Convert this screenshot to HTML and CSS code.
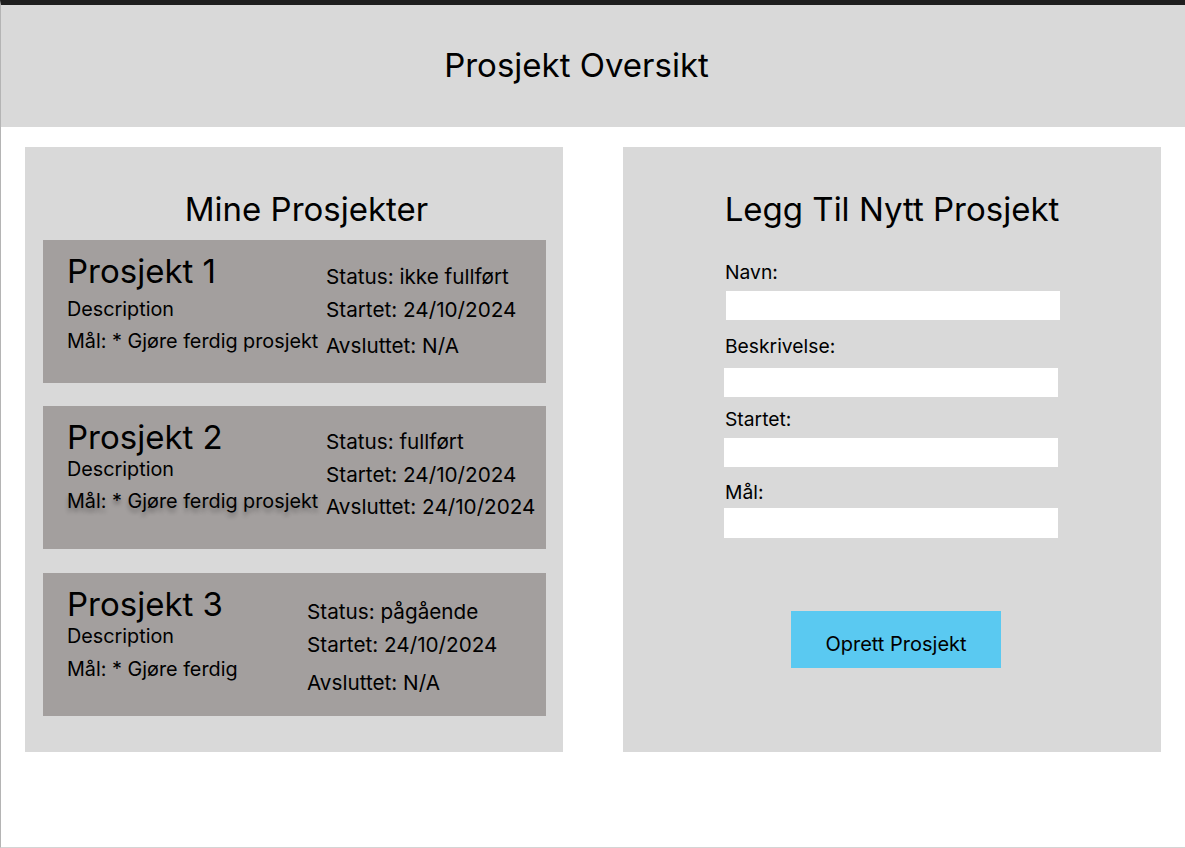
FILE: index.html
```html
<!DOCTYPE html>
<html lang="no">
<head>
<meta charset="utf-8">
<title>Prosjekt Oversikt</title>
<link rel="stylesheet" href="styles.css">
</head>
<body>
<div class="frame">
  <header class="topbar">
    <h1 class="page-title">Prosjekt Oversikt</h1>
  </header>
  <main class="content">
    <section class="panel">
      <h2 class="panel-title panel-title--left">Mine Prosjekter</h2>
      <div class="card-list">
        <article class="card card-1">
          <div class="card-main">
            <h3 class="card-title">Prosjekt 1</h3>
            <p class="card-desc">Description</p>
            <p class="card-goal">Mål: * Gjøre ferdig prosjekt</p>
          </div>
          <div class="card-meta">
            <p class="meta-status">Status: ikke fullført</p>
            <p class="meta-start">Startet: 24/10/2024</p>
            <p class="meta-end">Avsluttet: N/A</p>
          </div>
        </article>
        <article class="card card-2">
          <div class="card-main">
            <h3 class="card-title">Prosjekt 2</h3>
            <p class="card-desc">Description</p>
            <p class="card-goal card-goal--shadow">Mål: * Gjøre ferdig prosjekt</p>
          </div>
          <div class="card-meta">
            <p class="meta-status">Status: fullført</p>
            <p class="meta-start">Startet: 24/10/2024</p>
            <p class="meta-end">Avsluttet: 24/10/2024</p>
          </div>
        </article>
        <article class="card card-3">
          <div class="card-main">
            <h3 class="card-title">Prosjekt 3</h3>
            <p class="card-desc">Description</p>
            <p class="card-goal">Mål: * Gjøre ferdig</p>
          </div>
          <div class="card-meta">
            <p class="meta-status">Status: pågående</p>
            <p class="meta-start">Startet: 24/10/2024</p>
            <p class="meta-end">Avsluttet: N/A</p>
          </div>
        </article>
      </div>
    </section>
    <section class="panel panel--form">
      <h2 class="panel-title">Legg Til Nytt Prosjekt</h2>
      <form class="form">
        <label class="field-label field-label--navn" for="navn">Navn:</label>
        <input class="field-input field-input--navn" id="navn" type="text">
        <label class="field-label field-label--beskrivelse" for="beskrivelse">Beskrivelse:</label>
        <input class="field-input field-input--beskrivelse" id="beskrivelse" type="text">
        <label class="field-label field-label--startet" for="startet">Startet:</label>
        <input class="field-input field-input--startet" id="startet" type="text">
        <label class="field-label field-label--maal" for="maal">Mål:</label>
        <input class="field-input field-input--maal" id="maal" type="text">
        <button class="submit" type="button">Oprett Prosjekt</button>
      </form>
    </section>
  </main>
</div>
</body>
</html>
```

FILE: styles.css
```css
* {
  box-sizing: border-box;
}

html, body {
  margin: 0;
  padding: 0;
  background: #ffffff;
}

body {
  font-family: "Inter", "Noto Sans", "Liberation Sans", sans-serif;
  color: #000000;
  width: 1185px;
  height: 848px;
  overflow: hidden;
}

.frame {
  height: 848px;
  border-top: 5px solid #1e1e1e;
  border-left: 1px solid #b4b4b4;
  border-bottom: 1px solid #d4d4d4;
  display: flex;
  flex-direction: column;
}

.topbar {
  height: 122px;
  background: #d9d9d9;
  display: flex;
  align-items: center;
  justify-content: center;
  padding-right: 33px;
  padding-bottom: 2px;
}

.page-title {
  margin: 0;
  font-size: 33px;
  font-weight: 400;
  line-height: 38px;
}

.content {
  display: flex;
  gap: 60px;
  padding: 20px 0 0 24px;
}

.panel {
  width: 538px;
  height: 605px;
  background: #d9d9d9;
  display: flex;
  flex-direction: column;
  padding-top: 43px;
}

.panel-title {
  margin: 0;
  font-size: 33px;
  font-weight: 400;
  line-height: 38px;
  text-align: center;
}

.panel-title--left {
  padding-left: 25px;
}

.card-list {
  display: flex;
  flex-direction: column;
  gap: 23px;
  margin: 12px 0 0 18px;
}

.card {
  width: 503px;
  height: 143px;
  background: #a39f9e;
  display: flex;
  padding-left: 24px;
}

.card-3 {
  margin-top: 1px;
}

.card p,
.card h3 {
  margin: 0;
}

.card-main {
  width: 259px;
  display: flex;
  flex-direction: column;
}

.card-3 .card-main {
  width: 240px;
}

.card-title {
  font-size: 33px;
  font-weight: 400;
  line-height: 38px;
  margin-top: 12px !important;
}

.card-desc,
.card-goal {
  font-size: 19.8px;
  line-height: 28px;
  white-space: nowrap;
}

.card-meta p {
  font-size: 20.7px;
  line-height: 28px;
  white-space: nowrap;
}

.card-desc {
  margin-top: 5px !important;
}

.card-goal {
  margin-top: 4px !important;
}

.card-2 .card-title {
  margin-top: 12px !important;
}

.card-2 .card-desc,
.card-3 .card-desc {
  margin-top: -1px !important;
}

.card-3 .card-title {
  margin-top: 12px !important;
}

.card-3 .card-goal {
  margin-top: 5px !important;
}

.card-goal--shadow {
  text-shadow: 0 4px 4px rgba(0, 0, 0, 0.3);
}

.card-meta {
  display: flex;
  flex-direction: column;
}

.meta-status {
  margin-top: 23px !important;
}

.meta-start {
  margin-top: 5px !important;
}

.meta-end {
  margin-top: 8px !important;
}

.card-2 .meta-status {
  margin-top: 22px !important;
}

.card-2 .meta-end {
  margin-top: 4px !important;
}

.card-3 .meta-status {
  margin-top: 25px !important;
}

.card-3 .meta-end {
  margin-top: 10px !important;
}

.form {
  display: flex;
  flex-direction: column;
  padding-left: 102px;
  width: 438px;
}

.field-label {
  font-size: 19.3px;
  line-height: 22px;
}

.field-input {
  width: 334px;
  height: 29px;
  border: none;
  background: #ffffff;
  margin: 0 0 0 -1px;
  padding: 0;
  outline: none;
}

.field-label--navn {
  margin-top: 33px;
}

.field-input--navn {
  margin-top: 8px;
  margin-left: 1px;
}

.field-label--beskrivelse {
  margin-top: 15px;
}

.field-input--beskrivelse {
  margin-top: 11px;
}

.field-label--startet {
  margin-top: 11px;
}

.field-input--startet {
  margin-top: 8px;
}

.field-label--maal {
  margin-top: 14px;
}

.field-input--maal {
  margin-top: 5px;
  height: 30px;
}

.submit {
  margin-top: 73px;
  margin-left: 66px;
  width: 210px;
  height: 57px;
  border: none;
  background: #5ac9f1;
  font-family: "Inter", "Noto Sans", "Liberation Sans", sans-serif;
  font-size: 20px;
  color: #000000;
  padding: 8px 0 0 0;
  cursor: pointer;
}
```
